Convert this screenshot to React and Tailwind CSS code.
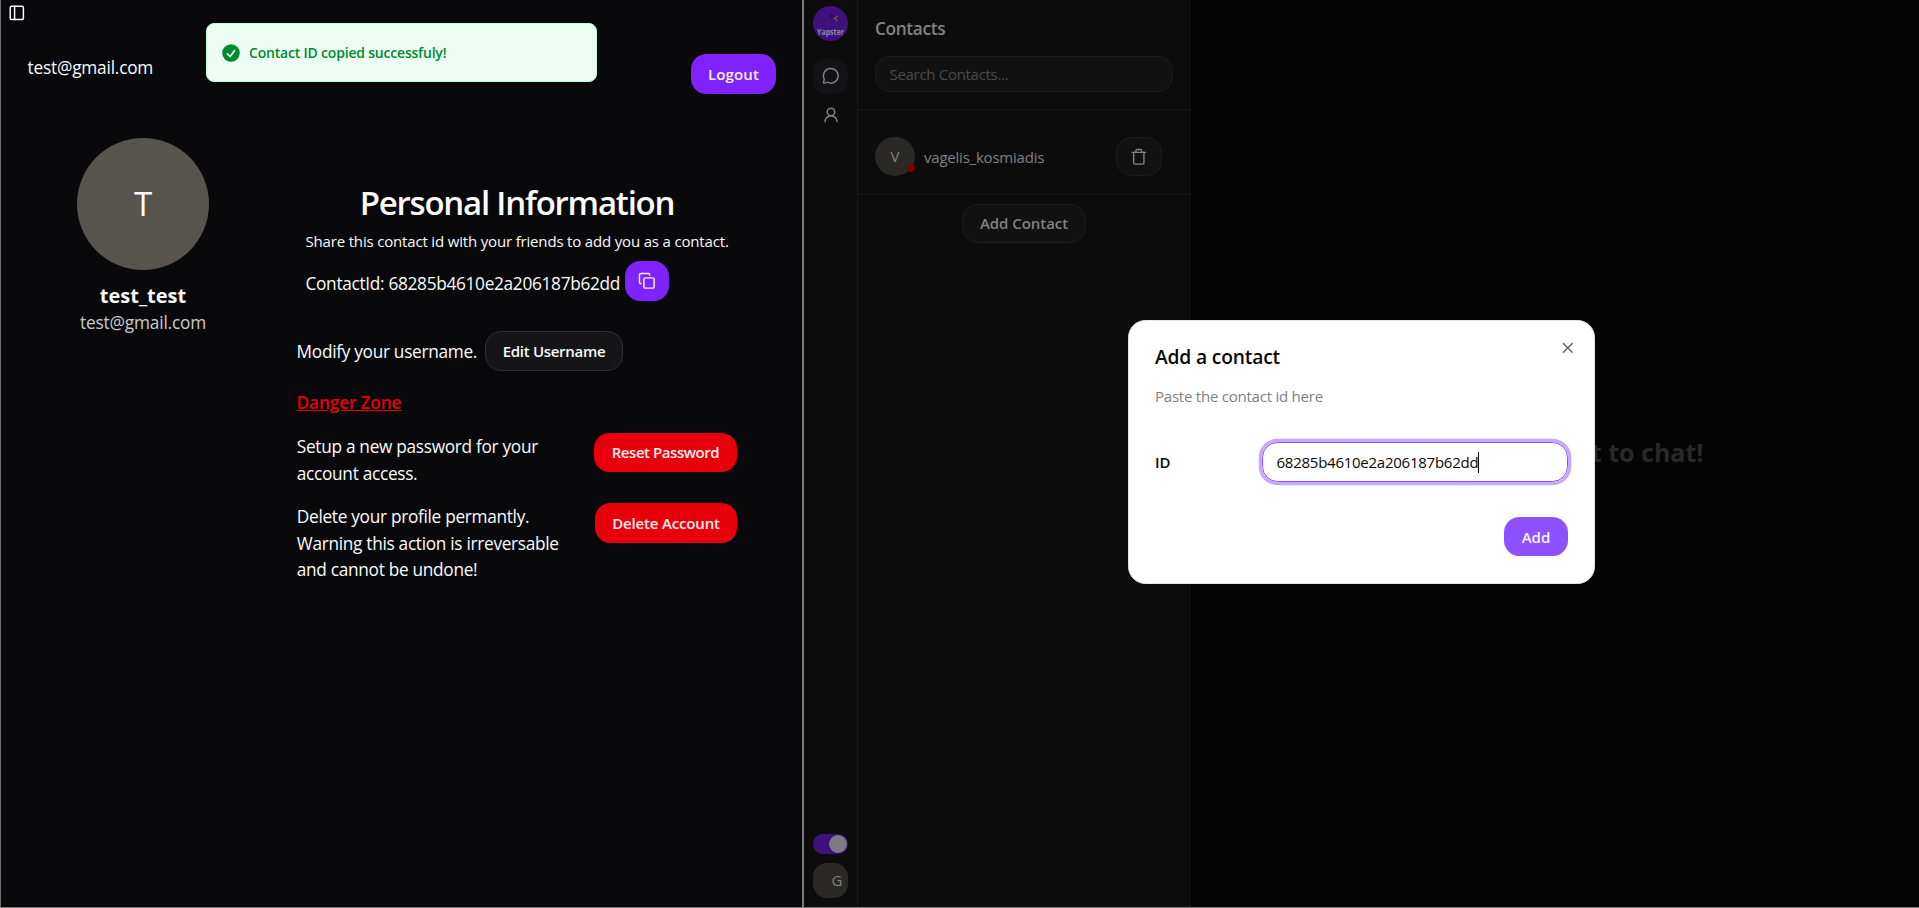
import React from 'react';
import { PanelLeft, Copy, MessageCircle, X } from 'lucide-react';

function PrimaryButton({ className, children }) {
  return (
    <button className={'flex h-10 items-center justify-center rounded-[15.5px] bg-[#7f22fe] text-[15px] font-semibold text-[#f5f3ff] ' + className}>
      {children}
    </button>
  );
}

function DangerButton({ className, children }) {
  return (
    <button className={'flex items-center justify-center rounded-[15.5px] bg-[#e7000b] text-[15px] font-semibold text-[#fdeeee] ' + className}>
      {children}
    </button>
  );
}

function UserIcon() {
  return (
    <svg viewBox="0 0 24 24" className="size-[18px]" fill="none" stroke="currentColor" strokeWidth="2" strokeLinecap="round" strokeLinejoin="round">
      <circle cx="12" cy="8" r="5" />
      <path d="M20 21a8 8 0 0 0-16 0" />
    </svg>
  );
}

function TrashIcon() {
  return (
    <svg viewBox="0 0 24 24" className="size-[17.6px]" fill="none" stroke="currentColor" strokeWidth="1.9" strokeLinecap="round" strokeLinejoin="round">
      <path d="M3 6h18" />
      <path d="M19 6v14c0 1-1 2-2 2H7c-1 0-2-1-2-2V6" />
      <path d="M8 6V4c0-1 1-2 2-2h4c1 0 2 1 2 2v2" />
    </svg>
  );
}

function Toast() {
  return (
    <div className="absolute top-[23px] left-[205px] flex h-[59px] w-[391px] items-center rounded-lg border border-[#bffcd9] bg-[#ecfdf3] pl-[13px] text-[#008a2e]">
      <svg viewBox="0 0 20 20" className="size-[22px]" fill="currentColor">
        <path fillRule="evenodd" clipRule="evenodd" d="M10 18a8 8 0 100-16 8 8 0 000 16zm3.857-9.809a.75.75 0 00-1.214-.882l-3.483 4.79-1.88-1.88a.75.75 0 10-1.06 1.061l2.5 2.5a.75.75 0 001.137-.089l4-5.5z" />
      </svg>
      <span className="ml-[7px] text-[14px] leading-5 font-semibold tracking-[-0.2px]">Contact ID copied successfuly!</span>
    </div>
  );
}

function ProfilePane() {
  return (
    <section className="relative flex w-[802px] flex-col border-l border-[#6e6e6e] bg-[#09090b] text-[17.25px] leading-[26.4px] text-[#fafafa]">
      <PanelLeft className="mt-[3.5px] ml-[6.7px] size-[17.6px]" strokeWidth={2} />
      <header className="mt-[33px] flex items-start justify-between pr-[26px] pl-[26.5px]">
        <span className="mt-px tracking-[-0.2px]">test@gmail.com</span>
        <PrimaryButton className="w-[85px] tracking-[0.15px]">Logout</PrimaryButton>
      </header>
      <div className="mt-[44px] flex">
        <aside className="ml-[76px] flex w-[132px] flex-col items-center">
          <div className="flex size-[132px] items-center justify-center rounded-full bg-[#57534d] pt-px text-[33px]">T</div>
          <p className="mt-[12px] text-[20px] leading-7 font-bold">test_test</p>
          <p className="tracking-[-0.16px] text-[#c9c9cb]">test@gmail.com</p>
        </aside>
        <div className="mt-[45px] ml-[87px] w-[441px]">
          <h1 className="pl-px text-center text-[33px] leading-10 font-semibold tracking-[-1.22px]">Personal Information</h1>
          <p className="mt-[7px] ml-[9.5px] text-[15px] leading-[22px] tracking-[-0.17px]">Share this contact id with your friends to add you as a contact.</p>
          <div className="mt-[9px] ml-[9.5px] flex h-10">
            <span className="mt-[9.5px] w-[319.5px] tracking-[-0.31px]">ContactId: 68285b4610e2a206187b62dd</span>
            <PrimaryButton className="w-11">
              <Copy className="size-[17.6px]" strokeWidth={2} />
            </PrimaryButton>
          </div>
          <div className="mt-[30px] flex h-10 items-center">
            <span className="mt-[2px] w-[189px] pl-[0.6px] tracking-[-0.3px]">Modify your username.</span>
            <button className="h-10 w-[138px] rounded-[15.5px] border border-[#303032] bg-[#151518] text-[15px] font-semibold tracking-[-0.3px]">Edit Username</button>
          </div>
          <p className="mt-[19px] ml-[0.6px] font-semibold tracking-[-0.15px] text-[#e7000b] underline">Danger Zone</p>
          <div className="mt-[16.6px] flex items-start justify-between">
            <p className="mt-px ml-[0.8px] tracking-[-0.3px]">Setup a new password for your<br />account access.</p>
            <DangerButton className="h-[39px] w-[143px] tracking-[-0.44px]">Reset Password</DangerButton>
          </div>
          <div className="mt-[16.2px] flex items-start justify-between">
            <p className="mt-px ml-[0.8px] tracking-[-0.3px]">Delete your profile permantly.<br />Warning this action is irreversable<br />and cannot be undone!</p>
            <DangerButton className="h-10 w-[142px] tracking-[-0.17px]">Delete Account</DangerButton>
          </div>
        </div>
      </div>
      <Toast />
    </section>
  );
}

function Rail() {
  return (
    <nav className="flex w-[54px] flex-col items-center border-r border-[#181818] bg-[#0c0c0c] pt-[6px] pb-[9px] text-[#828282]">
      <svg viewBox="0 0 35 35" className="size-[35px]">
        <circle cx="17.5" cy="17.5" r="17.5" fill="#3f117f" />
        <circle cx="18.7" cy="10" r="1.3" fill="#1c0a3a" />
        <path d="M25 9.8l-3.4 2.4 3 2.5" fill="none" stroke="#8a5a1c" strokeWidth="1.4" />
        <text x="17.5" y="28.8" textAnchor="middle" textLength="27" lengthAdjust="spacingAndGlyphs" fontSize="8" fontWeight="700" fill="#938a9c" fontFamily="Open Sans, sans-serif">Yapster</text>
      </svg>
      <button className="mt-[18px] flex size-[35px] items-center justify-center rounded-[13px] bg-[#131315] pb-[1.4px]">
        <MessageCircle className="size-[17.6px]" strokeWidth={2} />
      </button>
      <button className="mt-[4px] flex size-[35px] items-center justify-center pb-[0.8px]">
        <UserIcon />
      </button>
      <div className="mt-auto flex h-5 w-[35px] items-center justify-end rounded-full bg-[#3f117f] pr-px">
        <span className="size-[18px] rounded-full bg-[#7d7a82]" />
      </div>
      <div className="mt-[9px] flex size-[35px] items-center justify-center rounded-[14px] bg-[#2b2926] pl-[13px] text-[15px]">G</div>
    </nav>
  );
}

function ContactsPanel() {
  return (
    <section className="flex w-[333px] flex-col border-r border-[#131313] bg-[#0c0c0c] text-[15px] text-[#828282]">
      <header className="h-[110px] border-b border-[#181818] pt-[16px] pl-[17px]">
        <h2 className="text-[17.25px] leading-[26px] font-semibold tracking-[-0.35px]">Contacts</h2>
        <div className="mt-[14px] flex h-9 w-[298px] items-center rounded-[15.5px] border border-[#1d1d1d] bg-[#111111] pl-[13.5px] tracking-[-0.3px] text-[#4a4a4f]">Search Contacts...</div>
      </header>
      <div className="flex h-[85px] items-start border-b border-[#181818] pt-[27px] pl-[17px]">
        <div className="relative flex h-[39px] w-10 items-center justify-center rounded-full bg-[#2b2926]">
          V
          <span className="absolute right-0 bottom-[4px] size-2 rounded-full bg-[#750408]" />
        </div>
        <span className="ml-[9px] w-[192px] leading-[40px] tracking-[-0.22px]">vagelis_kosmiadis</span>
        <button className="flex h-[39px] w-[46px] items-center justify-center rounded-[15.5px] border border-[#1d1d1d] bg-[#111111] pr-px">
          <TrashIcon />
        </button>
      </div>
      <button className="mt-[9px] ml-[104px] h-[39px] w-[124px] rounded-[15.5px] border border-[#1d1d1d] bg-[#111111] font-semibold tracking-[-0.05px]">Add Contact</button>
    </section>
  );
}

function AddContactDialog() {
  return (
    <div className="absolute top-[320px] left-[1128px] flex h-[264px] w-[467px] flex-col rounded-[17.5px] border border-[#e4e4e7] bg-white pr-[26px] pl-[26px] text-[15px] text-[#09090b]">
      <X className="absolute top-[18px] right-[17.5px] size-[17.6px] text-[#606062]" strokeWidth={2} />
      <h2 className="mt-[25px] text-[19.25px] leading-[22px] font-semibold tracking-[-0.18px]">Add a contact</h2>
      <p className="mt-[17px] leading-[22px] tracking-[-0.23px] text-[#808088]">Paste the contact id here</p>
      <div className="mt-[35px] flex h-10 items-center">
        <span className="w-[107px] font-semibold">ID</span>
        <div className="flex h-10 flex-1 items-center rounded-[15.5px] border border-[#8e51ff] pl-[13.5px] tracking-[-0.25px] ring-[3.3px] ring-[#c6a8ff]">
          68285b4610e2a206187b62dd
          <span className="h-[21px] w-px bg-black" />
        </div>
      </div>
      <button className="mt-[35px] h-[39px] w-16 self-end rounded-[15.5px] bg-[#8e51ff] pt-px font-semibold text-[#f5f3ff] shadow-xs">Add</button>
    </div>
  );
}

export default function App() {
  return (
    <div className="relative flex h-[908px] w-full overflow-hidden border-b border-[#7a7a7a] bg-[#040404] font-['Open_Sans','Segoe_UI',sans-serif]">
      <ProfilePane />
      <div className="w-[2px] bg-[#7a7a7a]" />
      <Rail />
      <ContactsPanel />
      <main className="flex flex-1 items-center justify-center bg-[#040404] pr-[2px] pb-[2px] text-[25px] leading-[35px] font-bold text-[#2a2927]">
        Select a contact to chat!
      </main>
      <AddContactDialog />
    </div>
  );
}
